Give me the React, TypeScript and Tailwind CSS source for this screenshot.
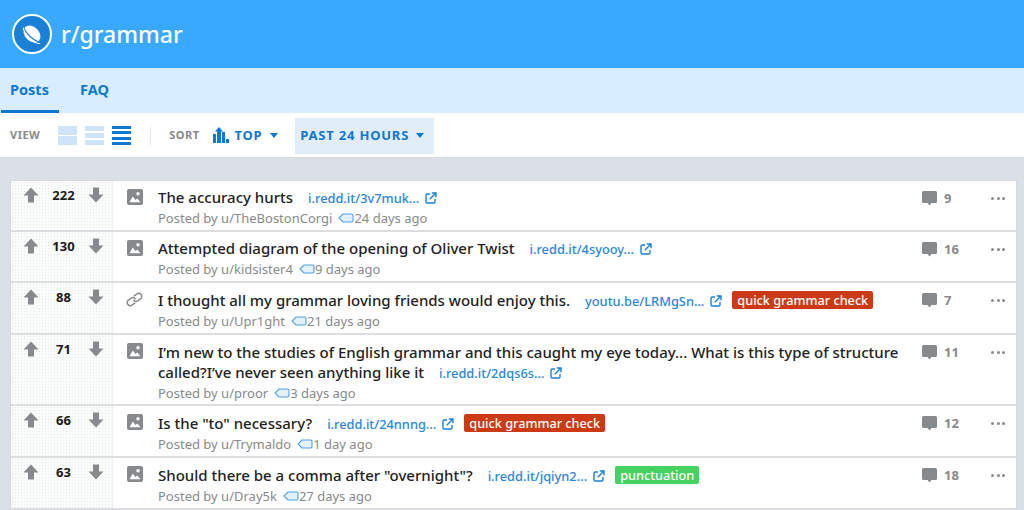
import type { ReactNode } from 'react'

const font = { fontFamily: '"Noto Sans", sans-serif' }

interface Post {
  score: number
  kind: 'image' | 'link'
  title: ReactNode
  url: string
  author: string
  age: string
  comments: number
  flair?: { label: string; color: 'red' | 'green' }
  height: string
  pad: string
}

const posts: Post[] = [
  { score: 222, kind: 'image', title: 'The accuracy hurts', url: 'i.redd.it/3v7muk...', author: 'TheBostonCorgi', age: '24 days ago', comments: 9, height: 'h-[51px]', pad: 'pt-[6px]' },
  { score: 130, kind: 'image', title: 'Attempted diagram of the opening of Oliver Twist', url: 'i.redd.it/4syooy...', author: 'kidsister4', age: '9 days ago', comments: 16, height: 'h-[51px]', pad: 'pt-[6px]' },
  { score: 88, kind: 'link', title: 'I thought all my grammar loving friends would enjoy this.', url: 'youtu.be/LRMgSn...', author: 'Upr1ght', age: '21 days ago', comments: 7, flair: { label: 'quick grammar check', color: 'red' }, height: 'h-[52px]', pad: 'pt-[7px]' },
  { score: 71, kind: 'image', title: 'I’m new to the studies of English grammar and this caught my eye today... What is this type of structure called?I’ve never seen anything like it', url: 'i.redd.it/2dqs6s...', author: 'proor', age: '3 days ago', comments: 11, height: 'h-[71px]', pad: 'pt-[7px]' },
  { score: 66, kind: 'image', title: 'Is the "to" necessary?', url: 'i.redd.it/24nnng...', author: 'Trymaldo', age: '1 day ago', comments: 12, flair: { label: 'quick grammar check', color: 'red' }, height: 'h-[52px]', pad: 'pt-[7px]' },
  { score: 63, kind: 'image', title: 'Should there be a comma after "overnight"?', url: 'i.redd.it/jqiyn2...', author: 'Dray5k', age: '27 days ago', comments: 18, flair: { label: 'punctuation', color: 'green' }, height: 'h-[52px]', pad: 'pt-[7px]' },
]

function Arrow({ down }: { down?: boolean }) {
  return (
    <svg viewBox="0 0 16 16" className={down ? 'w-[16px] h-[16px] rotate-180' : 'w-[16px] h-[16px]'} fill="#878a8c">
      <path d="M8 0.5 15.500 8.600H11V15.500H5V8.600H0.500Z" />
    </svg>
  )
}

function ImageIcon() {
  return (
    <svg viewBox="0 0 16 16" className="w-[16px] h-[16px]">
      <rect x="0" y="0" width="16" height="16" rx="2" fill="#878a8c" />
      <circle cx="11" cy="4.800" r="1.700" fill="#fff" />
      <path d="M2.500 13.200 5.800 7.400 8.400 11 10.300 9.400 13.500 13.200Z" fill="#fff" />
    </svg>
  )
}

function LinkIcon() {
  return (
    <svg viewBox="0 0 16 16" className="w-[17px] h-[17px] rotate-[10deg]" fill="none" stroke="#878a8c" strokeWidth="1.400" strokeLinecap="round">
      <path d="M7.200 4.600 9.400 2.300a2.700 2.700 0 0 1 3.900 0l.2.2a2.700 2.700 0 0 1 0 3.900L11 8.900a2.700 2.700 0 0 1-3.600 0" />
      <path d="M8.800 11.400 6.600 13.700a2.700 2.700 0 0 1-3.900 0l-.2-.2a2.700 2.700 0 0 1 0-3.900L5 7.100a2.700 2.700 0 0 1 3.600 0" />
    </svg>
  )
}

function ExternalIcon() {
  return (
    <svg viewBox="0 0 12 12" className="w-[12px] h-[12px] shrink-0" fill="none" stroke="#1a7fd6" strokeWidth="1.400">
      <path d="M5 2H2.200A1.200 1.200 0 0 0 1 3.200v6.600A1.200 1.200 0 0 0 2.200 11h6.600A1.200 1.200 0 0 0 10 9.800V7" />
      <path d="M4.800 7.200 10.400 1.600M6.800 1h4.200v4.200" />
    </svg>
  )
}

function TagIcon() {
  return (
    <svg viewBox="0 0 16 10" className="w-[16px] h-[10px] shrink-0" fill="#e4f0fb" stroke="#4f9fe4" strokeWidth="1.100">
      <path d="M5 1h8.500A1.500 1.500 0 0 1 15 2.500v5A1.500 1.500 0 0 1 13.500 9H5L1 5Z" />
    </svg>
  )
}

function CommentIcon() {
  return (
    <svg viewBox="0 0 15 15" className="w-[15px] h-[15px]" fill="#878a8c">
      <path d="M1.500 0h12A1.500 1.500 0 0 1 15 1.500v9a1.500 1.500 0 0 1-1.500 1.500H9.500L7.500 14.500 5.500 12h-4A1.500 1.500 0 0 1 0 10.500v-9A1.500 1.500 0 0 1 1.500 0Z" />
    </svg>
  )
}

function Caret() {
  return (
    <svg viewBox="0 0 8 5" className="w-[8px] h-[5px]" fill="#0f78d2">
      <path d="M0 0h8L4 5Z" />
    </svg>
  )
}

function PostRow({ post }: { post: Post }) {
  return (
    <div className={`flex border-b-2 border-[#dcdde0] ${post.height}`}>
      <div className="w-[102px] shrink-0 flex justify-between items-start pl-[12px] pr-[8px] pt-[6px] border-r border-[#eceef0] bg-[#fafbfb] bg-[radial-gradient(#e6ebe6_0.5px,transparent_0.5px)] bg-[length:3px_3px]">
        <Arrow />
        <span className="text-[13px] leading-[16px] font-bold text-[#1c1c1c]">{post.score}</span>
        <Arrow down />
      </div>
      <div className="w-[45px] shrink-0 flex justify-center pt-[8px] pr-[2px]">
        {post.kind === 'image' ? <ImageIcon /> : <LinkIcon />}
      </div>
      <div className={`flex-1 min-w-0 ${post.pad}`}>
        <div className="text-[15px] leading-[20px] text-[#222222] font-medium">
          {post.title}
          <span className="inline-flex items-center gap-[6px] ml-[15px] align-baseline">
            <span className="text-[12.8px] text-[#2a86d8]">{post.url}</span>
            <ExternalIcon />
            {post.flair && (
              <span className={`ml-[4px] -translate-y-[1px] text-[12.7px] leading-[18px] px-[5px] rounded-[2px] text-white ${post.flair.color === 'red' ? 'bg-[#cc3a13]' : 'bg-[#46d160]'}`}>
                {post.flair.label}
              </span>
            )}
          </span>
        </div>
        <div className="flex items-center text-[13px] leading-[18px] text-[#878a8c] mt-[1px]">
          <span>Posted by u/{post.author}</span>
          <span className="ml-[6px] flex"><TagIcon /></span>
          <span>{post.age}</span>
        </div>
      </div>
      <div className="w-[69px] shrink-0 flex items-start pt-[10px] gap-[7px] text-[13px] leading-[15px] font-bold text-[#878a8c]">
        <CommentIcon />
        <span>{post.comments}</span>
      </div>
      <div className="w-[25px] shrink-0 flex gap-[2.5px] pt-[16px]">
        <span className="w-[3px] h-[3px] rounded-full bg-[#878a8c]" />
        <span className="w-[3px] h-[3px] rounded-full bg-[#878a8c]" />
        <span className="w-[3px] h-[3px] rounded-full bg-[#878a8c]" />
      </div>
    </div>
  )
}

export default function App() {
  return (
    <div className="w-[1024px] h-[510px] overflow-hidden bg-[#dae0e6]" style={font}>
      {/* Banner */}
      <header className="h-[68px] bg-[#39a9ff] flex items-center pl-[12px] gap-[9px]">
        <div className="w-[40px] h-[40px] rounded-full border-[2px] border-white bg-[#1a7fd6] flex items-center justify-center">
          <svg viewBox="0 0 24 24" className="w-[26px] h-[26px]" fill="none">
            <ellipse cx="12" cy="12" rx="6.500" ry="9" fill="#fff" transform="rotate(-45 12 12)" />
            <path d="M4 6c3 6 8 11 15 14" stroke="#1a7fd6" strokeWidth="1.200" />
            <path d="M4 6c-.5 1.500 2 6 6 10s8 5.500 9.500 4.500" stroke="#fff" strokeWidth="1" />
          </svg>
        </div>
        <span className="text-[23px] leading-[32px] text-white font-medium">r/grammar</span>
      </header>

      {/* Tabs */}
      <nav className="h-[45px] bg-[#d8edff] flex items-stretch text-[14.5px] font-bold text-[#0f78d2]">
        <div className="w-[58px] ml-[1px] border-b-[3px] border-[#0f78d2] pl-[9px] pt-[2px] flex items-center">Posts</div>
        <div className="ml-[21px] flex items-center pb-[1px]">FAQ</div>
      </nav>

      {/* Sort bar */}
      <div className="h-[45px] bg-white flex items-center pl-[10px] pt-[1px] border-b border-[#d5dae0]">
        <span className="text-[11px] font-bold tracking-[0.5px] text-[#878a8c]">VIEW</span>
        <div className="flex gap-[8px] ml-[18px]">
          <div className="w-[19px] h-[19px] flex flex-col justify-between">
            <div className="h-[9px] bg-[#cfe4f7]" />
            <div className="h-[9px] bg-[#cfe4f7]" />
          </div>
          <div className="w-[19px] h-[19px] flex flex-col justify-between">
            <div className="h-[5px] bg-[#cfe4f7]" />
            <div className="h-[5px] bg-[#cfe4f7]" />
            <div className="h-[5px] bg-[#cfe4f7]" />
          </div>
          <div className="w-[19px] h-[19px] flex flex-col justify-between">
            <div className="h-[3px] bg-[#0f78d2]" />
            <div className="h-[3px] bg-[#0f78d2]" />
            <div className="h-[3px] bg-[#0f78d2]" />
            <div className="h-[3px] bg-[#0f78d2]" />
          </div>
        </div>
        <div className="w-px h-[21px] bg-[#e8ebee] ml-[19px]" />
        <span className="text-[11px] font-bold tracking-[0.5px] text-[#878a8c] ml-[18px]">SORT</span>
        <svg viewBox="0 0 16 16" className="w-[16px] h-[16px] ml-[13px] mb-[2px]" fill="#0f78d2">
          <path d="M5 0 9 4.500H7V16H3V4.500H1Z" transform="translate(1 0)" />
          <rect x="0" y="7" width="3" height="9" />
          <rect x="9" y="5" width="3" height="11" />
          <rect x="13" y="12" width="3" height="4" />
        </svg>
        <span className="text-[13px] font-bold tracking-[0.7px] text-[#0f78d2] ml-[6px]">TOP</span>
        <span className="ml-[8px] flex"><Caret /></span>
        <div className="ml-[17px] h-[36px] w-[139px] bg-[#e1eefa] flex items-center pl-[5px] gap-[7px]">
          <span className="text-[13px] font-bold tracking-[0.8px] text-[#0f78d2]">PAST 24 HOURS</span>
          <Caret />
        </div>
      </div>

      {/* Post list */}
      <main className="mx-[10px] mt-[22px] w-[1007px] bg-white border border-[#d5d8dc] border-b-0">
        {posts.map((post) => (
          <PostRow key={post.score} post={post} />
        ))}
      </main>
    </div>
  )
}
